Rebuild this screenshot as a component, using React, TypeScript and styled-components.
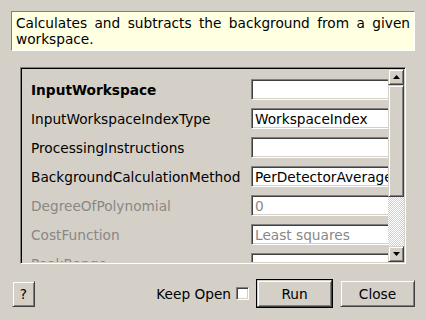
import styled, { createGlobalStyle } from "styled-components";

const GlobalStyle = createGlobalStyle`
  html, body {
    margin: 0;
    padding: 0;
    background: #d4d0c8;
  }
  body {
    font-family: "DejaVu Sans", "Liberation Sans", sans-serif;
    font-size: 13.7px;
    color: #000;
  }
`;

type Prop = {
  name: string;
  value: string;
  kind?: "mandatory" | "normal" | "disabled";
};

const properties: Prop[] = [
  { name: "InputWorkspace", value: "", kind: "mandatory" },
  { name: "InputWorkspaceIndexType", value: "WorkspaceIndex" },
  { name: "ProcessingInstructions", value: "" },
  { name: "BackgroundCalculationMethod", value: "PerDetectorAverage" },
  { name: "DegreeOfPolynomial", value: "0", kind: "disabled" },
  { name: "CostFunction", value: "Least squares", kind: "disabled" },
  { name: "PeakRange", value: "", kind: "disabled" },
];

const Dialog = styled.div`
  width: 426px;
  height: 320px;
  box-sizing: border-box;
  padding: 11px 11px 0 11px;
  display: flex;
  flex-direction: column;
  overflow: hidden;
`;

const Description = styled.div`
  height: 40px;
  box-sizing: border-box;
  background: #ffffe1;
  border-top: 1px solid #808080;
  border-left: 1px solid #808080;
  border-bottom: 1px solid #ffffff;
  border-right: 1px solid #ffffff;
  padding: 3px 4px 0 4px;
  line-height: 16px;
  text-align: justify;
  text-align-last: left;
`;

const Frame = styled.div`
  margin: 16px 9px 0 9px;
  height: 197px;
  box-sizing: border-box;
  display: flex;
  border-top: 1px solid #808080;
  border-left: 1px solid #808080;
  border-bottom: 1px solid #ffffff;
  border-right: 1px solid #ffffff;
  box-shadow: inset 1px 1px 0 #000, inset -1px -1px 0 #d4d0c8;
  padding: 1px;
`;

const Viewport = styled.div`
  flex: 1;
  overflow: hidden;
`;

const PropGrid = styled.div`
  display: grid;
  grid-template-columns: 220px 160px;
  grid-auto-rows: 21px;
  row-gap: 8px;
  padding: 10px 0 0 9px;
  align-items: center;
`;

const Label = styled.div<{ $kind: string }>`
  white-space: nowrap;
  font-weight: ${(p) => (p.$kind === "mandatory" ? "bold" : "normal")};
  color: ${(p) => (p.$kind === "disabled" ? "#8a8784" : "#000")};
`;

const Field = styled.div<{ $disabled: boolean }>`
  height: 21px;
  box-sizing: border-box;
  background: #fff;
  border-top: 1px solid #808080;
  border-left: 1px solid #808080;
  border-bottom: 1px solid #ffffff;
  border-right: 1px solid #ffffff;
  box-shadow: inset 1px 1px 0 #404040, inset -1px -1px 0 #d4d0c8;
  padding: 1px 3px 0 3px;
  line-height: 18px;
  white-space: nowrap;
  overflow: hidden;
  color: ${(p) => (p.$disabled ? "#8a8784" : "#000")};
`;

const ScrollBar = styled.div`
  width: 16px;
  display: flex;
  flex-direction: column;
`;

const raised = `
  box-sizing: border-box;
  background: #d4d0c8;
  border-top: 1px solid #d4d0c8;
  border-left: 1px solid #d4d0c8;
  border-bottom: 1px solid #404040;
  border-right: 1px solid #404040;
  box-shadow: inset 1px 1px 0 #ffffff, inset -1px -1px 0 #808080;
`;

const ArrowButton = styled.div`
  ${raised}
  height: 16px;
  display: flex;
  align-items: center;
  justify-content: center;
`;

const Thumb = styled.div`
  ${raised}
  height: 112px;
`;

const Track = styled.div`
  flex: 1;
  background: repeating-conic-gradient(#ffffff 0 25%, #d4d0c8 0 50%) 0 0 / 2px 2px;
`;

const Footer = styled.div`
  margin-top: 16px;
  display: flex;
  align-items: center;
  padding-left: 1px;
`;

const Button = styled.button<{ $w: number; $h?: number; $default?: boolean }>`
  ${raised}
  width: ${(p) => p.$w}px;
  height: ${(p) => p.$h ?? 27}px;
  margin: 0;
  padding: 0;
  font: inherit;
  color: #000;
  outline: ${(p) => (p.$default ? "1px solid #000" : "none")};
`;

const Spacer = styled.div`
  flex: 1;
`;

const KeepOpen = styled.label`
  display: flex;
  align-items: center;
  gap: 5px;
  margin-right: 8px;
`;

const Check = styled.span`
  width: 13px;
  height: 13px;
  box-sizing: border-box;
  background: #fff;
  border-top: 1px solid #808080;
  border-left: 1px solid #808080;
  border-bottom: 1px solid #ffffff;
  border-right: 1px solid #ffffff;
  box-shadow: inset 1px 1px 0 #404040, inset -1px -1px 0 #d4d0c8;
`;

const CloseButton = styled(Button)`
  margin-left: 8px;
`;

const Arrow = ({ up }: { up?: boolean }) => (
  <svg width="7" height="4" viewBox="0 0 7 4">
    <polygon points={up ? "3.5,0 7,4 0,4" : "0,0 7,0 3.5,4"} fill="#000" />
  </svg>
);

export default function App() {
  return (
    <>
      <GlobalStyle />
      <Dialog>
        <Description>
          Calculates and subtracts the background from a given workspace.
        </Description>
        <Frame>
          <Viewport>
            <PropGrid>
              {properties.map((p) => [
                <Label key={p.name} $kind={p.kind ?? "normal"}>
                  {p.name}
                </Label>,
                <Field key={p.name + "-v"} $disabled={p.kind === "disabled"}>
                  {p.value}
                </Field>,
              ])}
            </PropGrid>
          </Viewport>
          <ScrollBar>
            <ArrowButton>
              <Arrow up />
            </ArrowButton>
            <Thumb />
            <Track />
            <ArrowButton>
              <Arrow />
            </ArrowButton>
          </ScrollBar>
        </Frame>
        <Footer>
          <Button $w={23} $h={26}>?</Button>
          <Spacer />
          <KeepOpen>
            Keep Open
            <Check />
          </KeepOpen>
          <Button $w={75} $default>
            Run
          </Button>
          <CloseButton $w={75}>Close</CloseButton>
        </Footer>
      </Dialog>
    </>
  );
}
